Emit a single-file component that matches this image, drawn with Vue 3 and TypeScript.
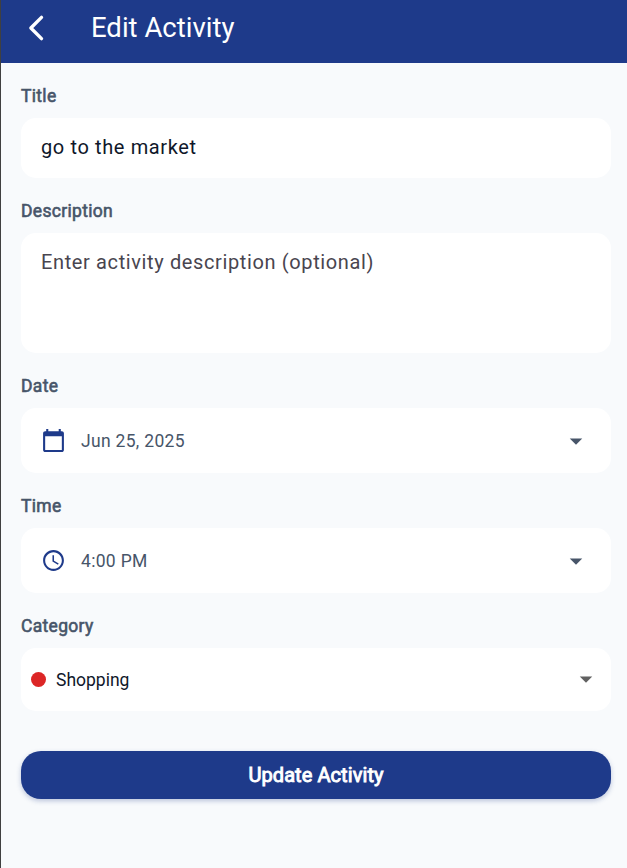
<script setup lang="ts">
import { ref } from 'vue'

const title = ref('go to the market')
const description = ref('')
const date = ref('Jun 25, 2025')
const time = ref('4:00 PM')
const category = ref({ name: 'Shopping', color: '#dc2626' })
</script>

<template>
  <div class="screen">
    <header class="app-bar">
      <button class="back" type="button" aria-label="Back">
        <svg viewBox="0 0 24 24" width="30" height="30">
          <path d="M16.400 3.500 7.900 12l8.500 8.500" fill="none" stroke="currentColor" stroke-width="2.700" stroke-linejoin="round" stroke-linecap="round" />
        </svg>
      </button>
      <h1>Edit Activity</h1>
    </header>

    <main class="form">
      <section class="group">
        <label class="label" for="title">Title</label>
        <input id="title" v-model="title" class="card text-input" type="text" />
      </section>

      <section class="group">
        <label class="label" for="description">Description</label>
        <textarea
          id="description"
          v-model="description"
          class="card text-input area"
          placeholder="Enter activity description (optional)"
        ></textarea>
      </section>

      <section class="group">
        <span class="label">Date</span>
        <button class="card picker" type="button">
          <svg class="lead" viewBox="0 0 24 24" width="25" height="25">
            <path d="M20 3h-1V1h-2v2H7V1H5v2H4c-1.100 0-2 .9-2 2v16c0 1.100.9 2 2 2h16c1.100 0 2-.9 2-2V5c0-1.100-.9-2-2-2zm0 18H4V8h16v13z" fill="currentColor" />
          </svg>
          <span class="value">{{ date }}</span>
          <svg class="caret" viewBox="0 0 24 24" width="30" height="30"><path d="M7 10l5 5 5-5z" fill="currentColor" /></svg>
        </button>
      </section>

      <section class="group">
        <span class="label">Time</span>
        <button class="card picker" type="button">
          <svg class="lead" viewBox="0 0 24 24" width="25" height="25">
            <path d="M11.99 2C6.470 2 2 6.480 2 12s4.470 10 9.990 10C17.520 22 22 17.520 22 12S17.520 2 11.990 2zM12 20c-4.420 0-8-3.580-8-8s3.580-8 8-8 8 3.580 8 8-3.580 8-8 8zm.5-13H11v6l5.250 3.150.75-1.230-4.500-2.670z" fill="currentColor" />
          </svg>
          <span class="value">{{ time }}</span>
          <svg class="caret" viewBox="0 0 24 24" width="30" height="30"><path d="M7 10l5 5 5-5z" fill="currentColor" /></svg>
        </button>
      </section>

      <section class="group">
        <span class="label">Category</span>
        <button class="card picker category" type="button">
          <span class="dot" :style="{ background: category.color }"></span>
          <span class="value">{{ category.name }}</span>
          <svg class="caret" viewBox="0 0 24 24" width="30" height="30"><path d="M7 10l5 5 5-5z" fill="currentColor" /></svg>
        </button>
      </section>

      <button class="submit" type="button">Update Activity</button>
    </main>
  </div>
</template>

<style>
body {
  margin: 0;
  background: #f8fafc;
}
</style>

<style scoped>
.screen {
  box-sizing: border-box;
  height: 868px;
  border-left: 1px solid #404040;
  background: #f8fafc;
  font-family: Roboto, 'Liberation Sans', sans-serif;
  overflow: hidden;
}
button,
input,
textarea {
  font-family: inherit;
  margin: 0;
  border: 0;
  outline: 0;
}
svg {
  display: block;
  flex: none;
}
.app-bar {
  display: flex;
  align-items: center;
  box-sizing: border-box;
  height: 63px;
  padding: 0 20px 7px;
  background: #1e3a8a;
  color: #fff;
}
.back {
  padding: 0;
  background: none;
  color: inherit;
}
h1 {
  margin: 0 0 0 40px;
  padding-bottom: 2px;
  font-size: 27.5px;
  font-weight: 400;
  line-height: 35px;
}
.form {
  display: flex;
  flex-direction: column;
  gap: 20px;
  padding: 20px 16px 0 20px;
}
.group {
  display: flex;
  flex-direction: column;
  gap: 10px;
}
.label {
  height: 25px;
  font-size: 17.5px;
  line-height: 27px;
  letter-spacing: 0.3125px;
  color: #475569;
  -webkit-text-stroke: 0.6px currentColor;
}
.card {
  box-sizing: border-box;
  width: 100%;
  border-radius: 15px;
  background: #fff;
}
.text-input {
  height: 60px;
  padding: 0 20px 2px;
  font-size: 20px;
  letter-spacing: 0.625px;
  color: #0f172a;
}
.area {
  display: block;
  height: 120px;
  padding: 14px 20px;
  line-height: 30px;
  resize: none;
}
.area::placeholder {
  color: #49454f;
  opacity: 1;
}
.picker {
  display: flex;
  align-items: center;
  height: 65px;
  padding: 0 20px;
  color: #475569;
  text-align: left;
}
.lead {
  margin-right: 15px;
  color: #1e3a8a;
}
.value {
  flex: 1;
  padding-top: 2px;
  font-size: 17.5px;
  line-height: 25px;
  letter-spacing: 0.3125px;
}
.category {
  height: 62.5px;
  padding: 0 10px;
}
.category .value {
  color: #0f172a;
  letter-spacing: 0;
}
.category .caret {
  color: #616161;
}
.dot {
  width: 15px;
  height: 15px;
  margin-right: 10px;
  border-radius: 50%;
}
.submit {
  height: 48.5px;
  margin-top: 20px;
  border-radius: 20px;
  background: #1e3a8a;
  color: #fff;
  font-size: 20px;
  line-height: 30px;
  letter-spacing: 0.08px;
  -webkit-text-stroke: 0.9px currentColor;
  box-shadow: 0 2px 5px rgba(30, 58, 138, 0.28);
}
</style>
